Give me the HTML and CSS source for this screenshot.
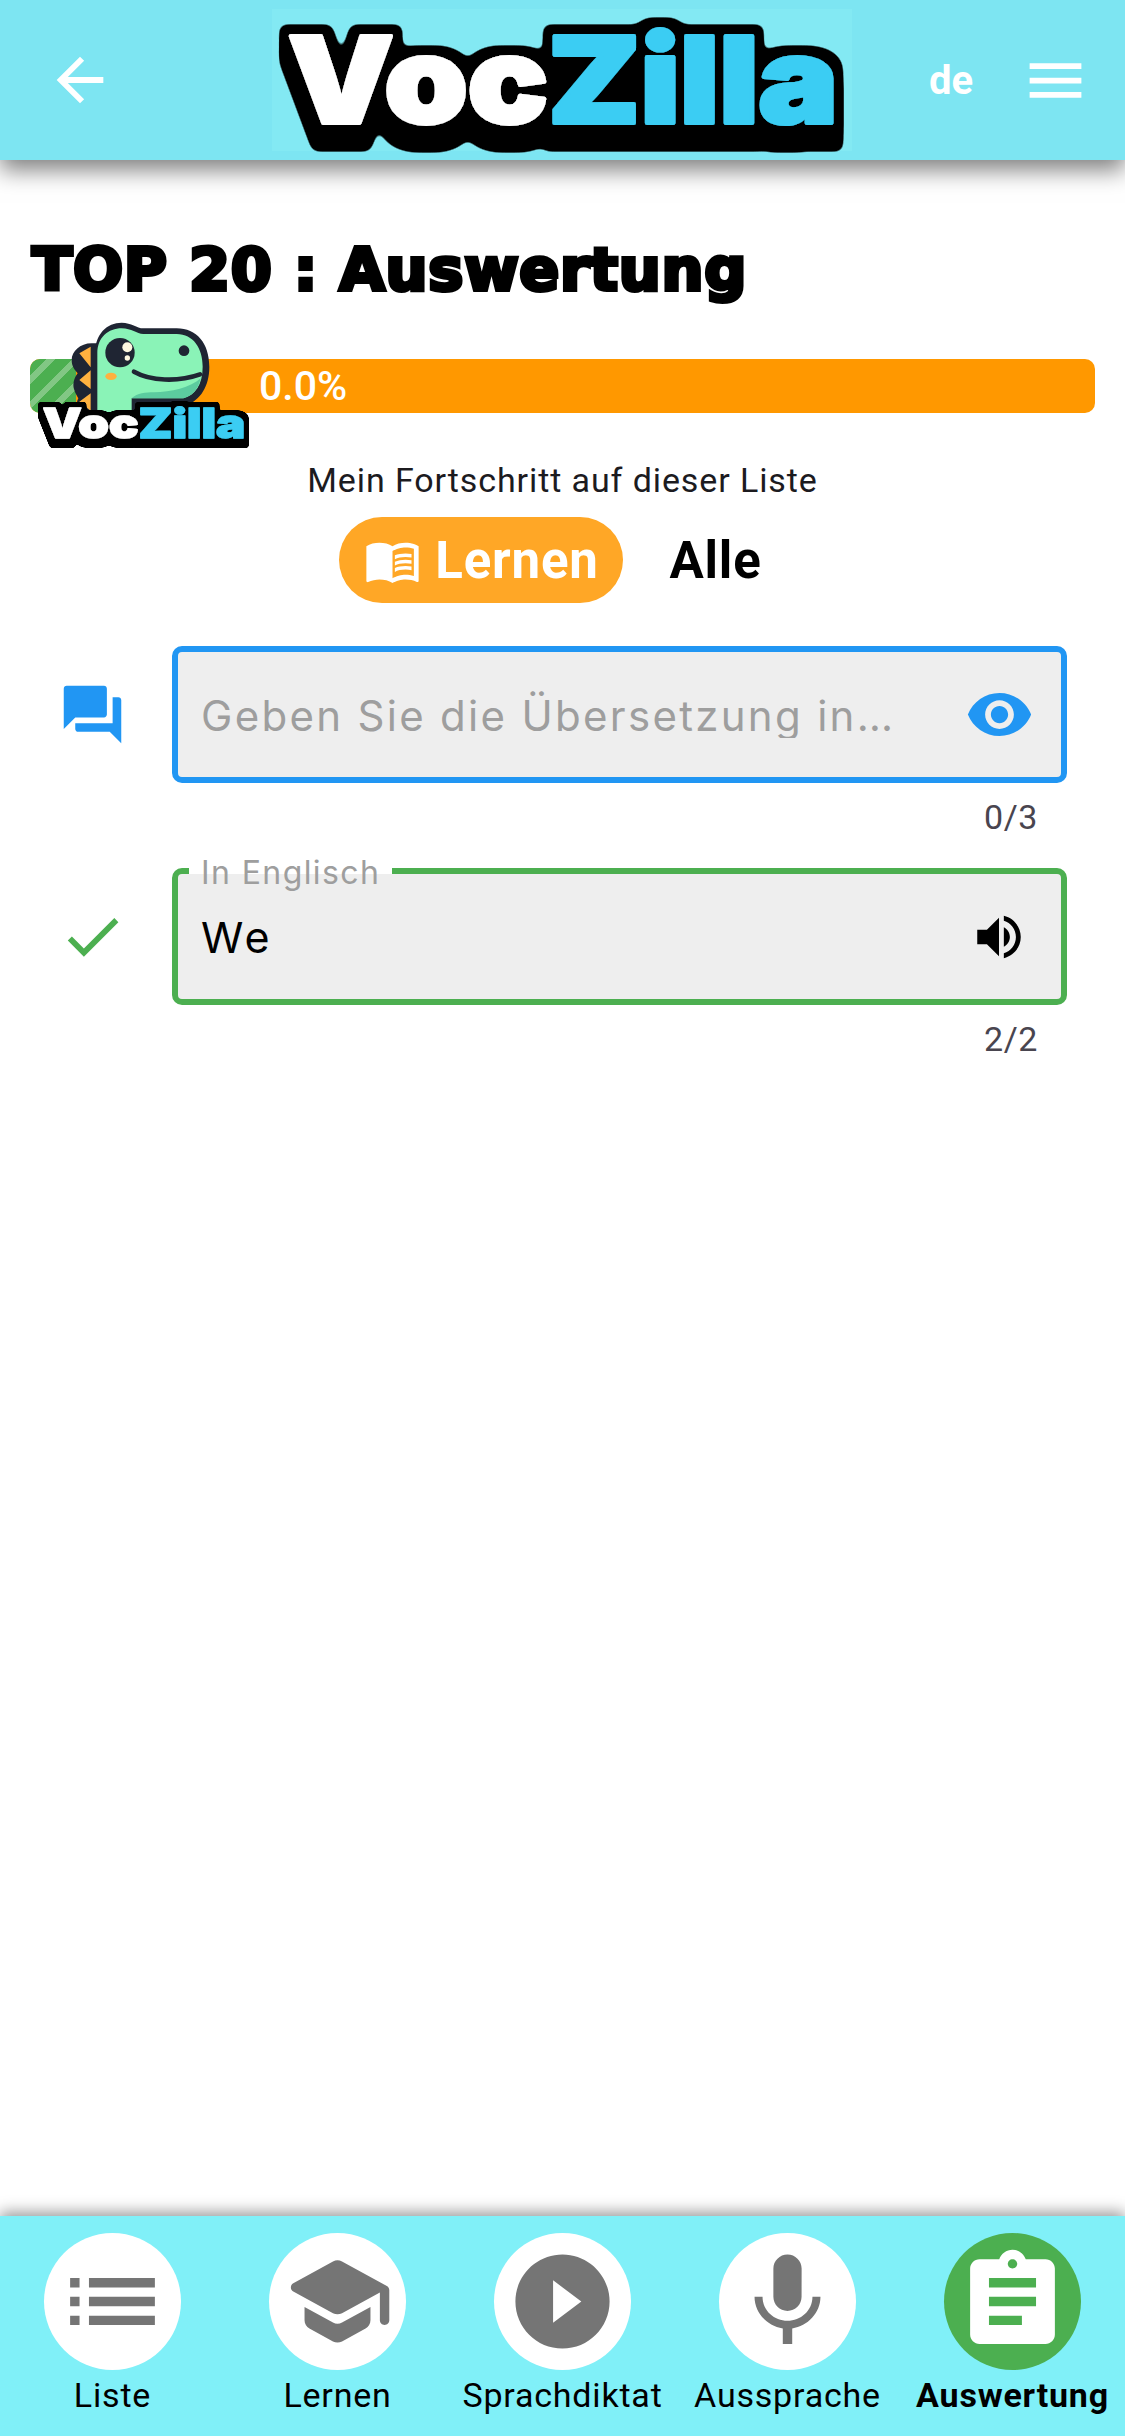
FILE: index.html
```html
<!DOCTYPE html>
<html lang="de">
<head>
<meta charset="utf-8">
<title>VocZilla</title>
<link rel="stylesheet" href="styles.css">
</head>
<body>
<svg class="defs" width="0" height="0" aria-hidden="true">
  <filter id="logo-big" x="-10%" y="-30%" width="120%" height="170%">
    <feMorphology in="SourceAlpha" operator="dilate" radius="9" result="d"/>
    <feGaussianBlur in="d" stdDeviation="4" result="b"/>
    <feComponentTransfer in="b" result="o"><feFuncA type="linear" slope="8" intercept="-3"/></feComponentTransfer>
    <feOffset in="o" dy="7" result="o1"/>
    <feOffset in="o" dy="13" result="o2"/>
    <feOffset in="o" dy="17" result="o3"/>
    <feMerge><feMergeNode in="o"/><feMergeNode in="o1"/><feMergeNode in="o2"/><feMergeNode in="o3"/><feMergeNode in="SourceGraphic"/></feMerge>
  </filter>
  <filter id="logo-small" x="-10%" y="-30%" width="120%" height="170%">
    <feMorphology in="SourceAlpha" operator="dilate" radius="15" result="d"/>
    <feGaussianBlur in="d" stdDeviation="5" result="b"/>
    <feComponentTransfer in="b" result="o"><feFuncA type="linear" slope="8" intercept="-3"/></feComponentTransfer>
    <feOffset in="o" dy="6" result="o1"/>
    <feOffset in="o" dy="12" result="o2"/>
    <feMerge><feMergeNode in="o"/><feMergeNode in="o1"/><feMergeNode in="o2"/><feMergeNode in="SourceGraphic"/></feMerge>
  </filter>
</svg>

<div class="app">
  <header class="topbar">
    <svg class="ic-arrow" viewBox="0 0 24 24"><path d="M20 11H7.83l5.59-5.59L12 4l-8 8 8 8 1.41-1.41L7.83 13H20v-2z"/></svg>
    <svg class="logo" viewBox="0 0 580 142">
      <text class="logo-text logo-text-big" x="16" y="114" textLength="550" lengthAdjust="spacingAndGlyphs"><tspan class="fill-white">Voc</tspan><tspan class="fill-blue">Zilla</tspan></text>
    </svg>
    <span class="lang">de</span>
    <svg class="ic-menu" viewBox="0 0 24 24"><path d="M3 18h18v-2H3v2zm0-5h18v-2H3v2zm0-7v2h18V6H3z"/></svg>
  </header>

  <main class="content">
    <h1 class="title">TOP 20 : Auswertung</h1>

    <div class="progress">
      <div class="progress-done"></div>
      <span class="progress-label">0.0%</span>
      <svg class="mascot" viewBox="0 0 720 450">
        <path class="dk" d="M215 100c-35 0-60 25-60 50 0 20 10 30 18 40-12 15-16 35-10 50 3 10 8 18 12 25-8 15-8 40 20 60h55V100z"/>
        <path class="or" d="M178 130l34-20v62zM178 210l34-29v56zM178 275l34-25v52z"/>
        <path class="dk" d="M225 330V130c0-58 36-92 80-92 30 0 45 17 65 17h100c60 0 98 45 98 115 0 60-28 100-68 115H345v45z"/>
        <path class="gr" d="M232 320V130c0-48 33-75 73-75 30 0 45 17 65 17h100c50 0 78 43 78 98 0 55-23 85-58 95H335v55z"/>
        <path class="gr-dk" d="M335 265h155c25-7 45-25 52-60-30 28-90 42-140 42-25 0-50 2-67 18z"/>
        <circle class="dk" cx="300" cy="128" r="44"/>
        <circle class="hl" cx="322" cy="112" r="15"/>
        <circle class="hl" cx="322" cy="144" r="8"/>
        <circle class="dk" cx="492" cy="122" r="16"/>
        <path class="smile" d="M342 185c50 28 130 32 198 8"/>
        <ellipse class="or" cx="273" cy="199" rx="17" ry="11"/>
        <text class="logo-text logo-text-small" x="68" y="385" textLength="608" lengthAdjust="spacingAndGlyphs"><tspan class="fill-white">Voc</tspan><tspan class="fill-blue">Zilla</tspan></text>
      </svg>
    </div>

    <p class="caption">Mein Fortschritt auf dieser Liste</p>

    <div class="modes">
      <div class="mode mode-active">
        <svg class="ic-book" viewBox="0 0 24 24"><path d="M21 5c-1.11-.35-2.33-.5-3.5-.5-1.95 0-4.05.4-5.5 1.5-1.45-1.1-3.55-1.5-5.5-1.5S2.45 4.9 1 6v14.65c0 .25.25.5.5.5.1 0 .15-.05.25-.05C3.1 20.45 5.05 20 6.5 20c1.95 0 4.05.4 5.5 1.5 1.35-.85 3.8-1.5 5.5-1.5 1.65 0 3.35.3 4.75 1.05.1.05.15.05.25.05.25 0 .5-.25.5-.5V6c-.6-.45-1.25-.75-2-1zm0 13.5c-1.1-.35-2.3-.5-3.5-.5-1.7 0-4.15.65-5.5 1.5V8c1.35-.85 3.8-1.5 5.5-1.5 1.2 0 2.4.15 3.5.5v11.5z"/><path d="M17.5 10.5c.88 0 1.73.09 2.5.26V9.24c-.79-.15-1.64-.24-2.5-.24-1.7 0-3.24.29-4.5.83v1.66c1.13-.64 2.7-.99 4.5-.99zM13 12.49v1.66c1.13-.64 2.7-.99 4.5-.99.88 0 1.73.09 2.5.26V11.9c-.79-.15-1.64-.24-2.5-.24-1.7 0-3.24.3-4.5.83zM17.5 14.33c-1.7 0-3.24.29-4.5.83v1.66c1.13-.64 2.7-.99 4.5-.99.88 0 1.73.09 2.5.26v-1.52c-.79-.16-1.64-.24-2.5-.24z"/></svg>
        <span>Lernen</span>
      </div>
      <div class="mode">Alle</div>
    </div>

    <section class="answers">
      <div class="answer">
        <svg class="ic-row ic-blue" viewBox="0 0 24 24"><path d="M21 6h-2v9H6v2c0 .55.45 1 1 1h11l4 4V7c0-.55-.45-1-1-1zm-4 6V3c0-.55-.45-1-1-1H3c-.55 0-1 .45-1 1v14l4-4h10c.55 0 1-.45 1-1z"/></svg>
        <div class="field field-blue">
          <span class="placeholder">Geben Sie die Übersetzung in…</span>
          <svg class="ic-row ic-blue" viewBox="0 0 24 24"><path d="M12 4.5C7 4.5 2.73 7.61 1 12c1.73 4.39 6 7.5 11 7.5s9.27-3.11 11-7.5c-1.73-4.39-6-7.5-11-7.5zM12 17c-2.76 0-5-2.24-5-5s2.24-5 5-5 5 2.24 5 5-2.24 5-5 5zm0-8c-1.66 0-3 1.34-3 3s1.34 3 3 3 3-1.34 3-3-1.34-3-3-3z"/></svg>
        </div>
        <span class="count">0/3</span>
      </div>
      <div class="answer">
        <svg class="ic-row ic-green" viewBox="0 0 24 24"><path d="M9 16.17L4.83 12l-1.42 1.41L9 19 21 7l-1.41-1.41z"/></svg>
        <div class="field field-green">
          <span class="field-label">In Englisch</span>
          <span class="value">We</span>
          <svg class="ic-speaker" viewBox="0 0 24 24"><path d="M3 9v6h4l5 5V4L7 9H3zm13.5 3c0-1.77-1.02-3.29-2.5-4.03v8.05c1.48-.73 2.5-2.25 2.5-4.02zM14 3.23v2.06c2.89.86 5 3.54 5 6.71s-2.11 5.85-5 6.71v2.06c4.01-.91 7-4.49 7-8.77s-2.99-7.86-7-8.77z"/></svg>
        </div>
        <span class="count">2/2</span>
      </div>
    </section>
  </main>

  <nav class="tabbar">
    <div class="tab">
      <div class="tab-circle"><svg class="ic-tab" viewBox="0 0 24 24"><path d="M3 13h2v-2H3v2zm0 4h2v-2H3v2zm0-8h2V7H3v2zm4 4h14v-2H7v2zm0 4h14v-2H7v2zM7 7v2h14V7H7z"/></svg></div>
      <span class="tab-label">Liste</span>
    </div>
    <div class="tab">
      <div class="tab-circle"><svg class="ic-tab" viewBox="0 0 24 24"><path d="M5 13.18v2.81c0 .73.4 1.41 1.04 1.76l5 2.73c.6.33 1.32.33 1.92 0l5-2.73c.64-.35 1.04-1.03 1.04-1.76v-2.81l-6.04 3.3c-.6.33-1.32.33-1.92 0L5 13.18zm6.04-9.66l-8.43 4.6c-.69.38-.69 1.38 0 1.76l8.43 4.6c.6.33 1.32.33 1.92 0L21 10.09V16c0 .55.45 1 1 1s1-.45 1-1V9.59c0-.37-.2-.7-.52-.88l-9.52-5.19a2.04 2.04 0 0 0-1.92 0z"/></svg></div>
      <span class="tab-label">Lernen</span>
    </div>
    <div class="tab">
      <div class="tab-circle"><svg class="ic-tab" viewBox="0 0 24 24"><path d="M12 2C6.48 2 2 6.48 2 12s4.48 10 10 10 10-4.48 10-10S17.52 2 12 2zm-2 14.5v-9l6 4.5-6 4.5z"/></svg></div>
      <span class="tab-label">Sprachdiktat</span>
    </div>
    <div class="tab">
      <div class="tab-circle"><svg class="ic-tab" viewBox="0 0 24 24"><path d="M12 14c1.66 0 2.99-1.34 2.99-3L15 5c0-1.66-1.34-3-3-3S9 3.34 9 5v6c0 1.66 1.34 3 3 3zm5.3-3c0 3-2.54 5.1-5.3 5.1S6.7 14 6.7 11H5c0 3.41 2.72 6.23 6 6.72V21h2v-3.28c3.28-.48 6-3.3 6-6.72h-1.7z"/></svg></div>
      <span class="tab-label">Aussprache</span>
    </div>
    <div class="tab tab-active">
      <div class="tab-circle"><svg class="ic-tab" viewBox="0 0 24 24"><path d="M19 3h-4.18C14.4 1.84 13.3 1 12 1c-1.3 0-2.4.84-2.82 2H5c-1.1 0-2 .9-2 2v14c0 1.1.9 2 2 2h14c1.1 0 2-.9 2-2V5c0-1.1-.9-2-2-2zm-7 0c.55 0 1 .45 1 1s-.45 1-1 1-1-.45-1-1 .45-1 1-1zm2 14H7v-2h7v2zm3-4H7v-2h10v2zm0-4H7V7h10v2z"/></svg></div>
      <span class="tab-label">Auswertung</span>
    </div>
  </nav>
</div>
</body>
</html>
```

FILE: styles.css
```css
* { box-sizing: border-box; }
html, body { margin: 0; padding: 0; background: #fff; }
body { font-family: Roboto, "Liberation Sans", sans-serif; color: #000; }
.defs { position: absolute; }
.app { width: 1125px; height: 2436px; display: flex; flex-direction: column; overflow: hidden; }

/* top bar */
.topbar {
  flex: none; height: 160px; background: #7de5f2; display: flex; align-items: center;
  padding: 0 35px 0 45px; box-shadow: 0 10px 22px rgba(0,0,0,.5); position: relative; z-index: 2;
}
.ic-arrow { width: 70px; height: 70px; fill: #fff; flex: none; }
.logo { width: 580px; height: 142px; margin-left: 157px; background: #83e9f3; flex: none; overflow: visible; }
.lang { margin-left: auto; margin-right: 48px; color: #fff; font-size: 40px; font-weight: 700; }
.ic-menu { width: 69px; height: 69px; fill: #fff; flex: none; }

.logo-text { font-family: Inter, sans-serif; font-weight: 900; }
.logo-text-big { font-size: 120px; filter: url(#logo-big); stroke-width: 4px; stroke-linejoin: round; }
.logo-text-small { font-size: 122px; filter: url(#logo-small); stroke-width: 4px; stroke-linejoin: round; }
.fill-white { fill: #fff; stroke: #fff; }
.fill-blue { fill: #3bcdf3; stroke: #3bcdf3; }

/* content */
.content { flex: 1; padding: 75px 30px 0; display: flex; flex-direction: column; min-height: 0; }
.title {
  margin: 0; padding-left: 2px; font-family: "DejaVu Sans", sans-serif; font-weight: 700; font-size: 59px; line-height: 70px;
  -webkit-text-stroke: 4px #000; white-space: nowrap; letter-spacing: .7px;
}
.progress {
  margin-top: 54px; height: 54px; background: #ff9800; border-radius: 10px; position: relative;
  display: flex; align-items: center; flex: none;
}
.progress-done {
  width: 46px; height: 54px; border-radius: 10px 0 0 10px;
  background: repeating-linear-gradient(135deg, #4caf50 0 12px, #82c784 12px 18px);
}
.progress-label { margin-left: 183px; color: #fff; font-size: 41px; font-weight: 500; }
.mascot { position: absolute; left: -10px; top: -49px; width: 240px; height: 150px; overflow: visible; }
.dk { fill: #1f2533; }
.or { fill: #ffb13f; }
.gr { fill: #8af3b7; }
.gr-dk { fill: #5ccb9f; }
.hl { fill: #fdf8e0; }
.smile { fill: none; stroke: #1f2533; stroke-width: 14px; stroke-linecap: round; }

.caption { margin: 47px 0 0; text-align: center; font-size: 34px; line-height: 40px; color: #1c1b1f; letter-spacing: .9px; }
.modes { margin-top: 17px; display: flex; justify-content: center; gap: 22px; }
.mode { height: 86px; padding: 0 24px; display: flex; align-items: center; font-size: 51px; font-weight: 700; letter-spacing: .8px; }
.mode-active { width: 284px; padding: 0; background: #ffa726; color: #fff; border-radius: 43px; gap: 14px; justify-content: center; }
.ic-book { width: 57px; height: 57px; fill: #fff; flex: none; }

/* answers */
.answers { margin-top: 43px; display: flex; flex-direction: column; gap: 31px; }
.answer { display: grid; grid-template-columns: 69px 895px; column-gap: 45px; margin-left: 28px; align-items: center; }
.ic-row { width: 69px; height: 69px; flex: none; }
.ic-speaker { width: 58px; height: 58px; flex: none; fill: #000; margin-right: 6px; }
.ic-blue { fill: #2196f3; }
.ic-green { fill: #4caf50; }
.field {
  height: 137px; background: #eee; border: 6px solid #000; border-radius: 10px; position: relative;
  display: flex; align-items: center; justify-content: space-between; padding: 0 27px 0 23px;
}
.field-blue { border-color: #2196f3; }
.field-green { border-color: #4caf50; }
.placeholder {
  font-family: Inter, sans-serif; font-size: 42px; line-height: 50px; height: 47px; overflow: hidden;
  color: #9e9e9e; letter-spacing: 2.3px; white-space: nowrap;
}
.value { font-family: Inter, sans-serif; font-size: 43px; color: #000; letter-spacing: 3.4px; }
.field-label {
  position: absolute; left: 11px; top: -20px; padding: 0 12px; font-family: Inter, sans-serif; font-size: 32px;
  line-height: 38px; color: #9e9e9e; letter-spacing: 1.4px;
  background: linear-gradient(#fff 0 20px, #eee 20px);
}
.count { grid-column: 2; justify-self: end; margin: 14px 29px 0 0; font-size: 34px; line-height: 40px; color: #49454f; letter-spacing: .6px; }

/* tab bar */
.tabbar {
  flex: none; height: 220px; background: #80f0f8; display: grid; grid-template-columns: repeat(5, 225px);
  box-shadow: 0 -4px 14px rgba(0,0,0,.4); position: relative; z-index: 2; padding-top: 17px;
}
.tab { display: flex; flex-direction: column; align-items: center; }
.tab-circle { width: 137px; height: 137px; border-radius: 50%; background: #fff; display: flex; align-items: center; justify-content: center; }
.ic-tab { width: 113px; height: 113px; fill: #757575; }
.tab-label { margin-top: 5px; font-size: 34px; line-height: 40px; white-space: nowrap; letter-spacing: .8px; }
.tab-active .tab-circle { background: #4caf50; }
.tab-active .ic-tab { fill: #fff; }
.tab-active .tab-label { font-weight: 700; }
```
